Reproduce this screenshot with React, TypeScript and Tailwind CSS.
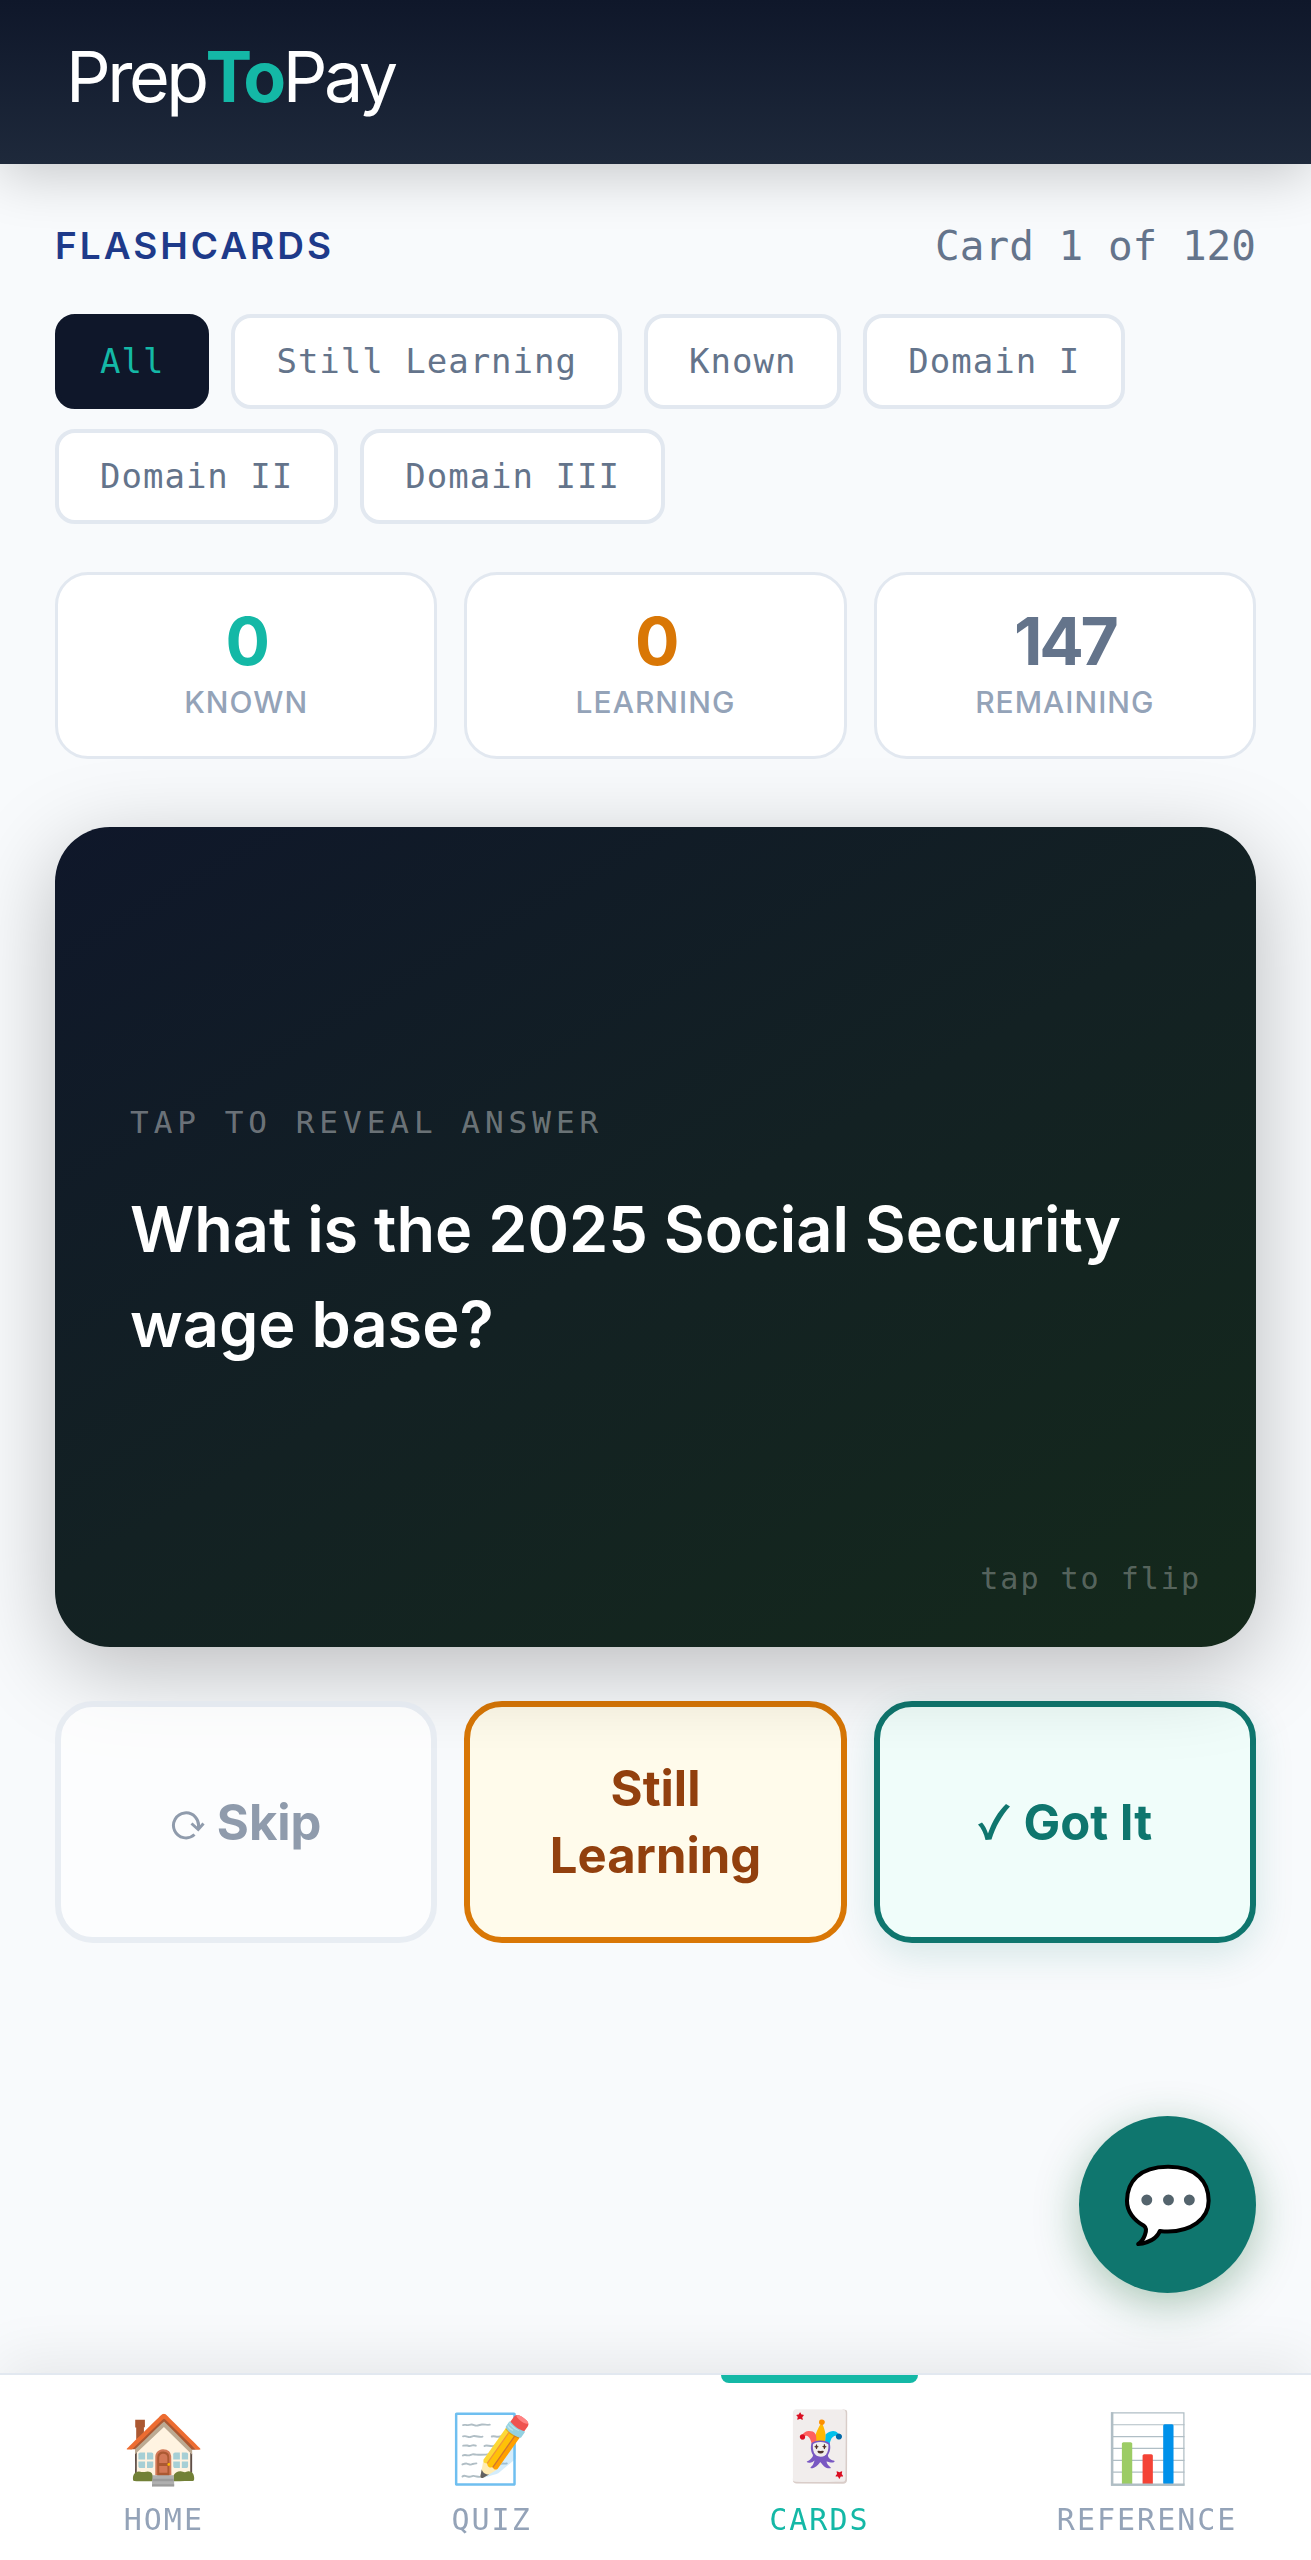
import React, { useState } from 'react';
import clsx from 'clsx';

const FILTERS = ['All', 'Still Learning', 'Known', 'Domain I', 'Domain II', 'Domain III'];

const STATS = [
  { label: 'Known', value: 0, color: 'text-[#14b8a6]' },
  { label: 'Learning', value: 0, color: 'text-[#d97706]' },
  { label: 'Remaining', value: 147, color: 'text-[#64748b]' },
];

const TABS = [
  { label: 'Home', icon: '🏠', href: '#home' },
  { label: 'Quiz', icon: '📝', href: '#quiz' },
  { label: 'Cards', icon: '🃏', href: '#cards' },
  { label: 'Reference', icon: '📊', href: '#reference' },
];

const MONO = "font-['DejaVu_Sans_Mono',monospace]";

function Header() {
  return (
    <header className="relative z-10 bg-gradient-to-b from-[#0f172a] to-[#1e293b] px-[66px] pt-8 pb-[42px] shadow-[0_11px_55px_rgba(0,0,0,0.2)]">
      <a href="#home" className="block w-fit text-[70px] leading-[90px] tracking-tighter text-white">
        Prep<span className="font-bold text-[#14b8a6]">To</span>Pay
      </a>
    </header>
  );
}

function Filters() {
  const [active, setActive] = useState('All');

  return (
    <div className="mt-[41px] flex flex-wrap gap-x-[22px] gap-y-5">
      {FILTERS.map((name) => (
        <button
          key={name}
          type="button"
          aria-pressed={active === name}
          onClick={() => setActive(name)}
          className={clsx(
            MONO,
            'rounded-[20px] border-4 px-[41px] py-[19px] text-[34px] leading-[49px] tracking-[1px]',
            active === name
              ? 'border-[#0f172a] bg-[#0f172a] text-[#14b8a6]'
              : 'border-slate-200 bg-white text-[#64748b]'
          )}
        >
          {name}
        </button>
      ))}
    </div>
  );
}

function Stats() {
  return (
    <div className="mt-12 grid grid-cols-3 gap-[27px]">
      {STATS.map((stat) => (
        <div key={stat.label} className="rounded-[33px] border-[3px] border-slate-200 bg-white py-[33px] text-center">
          <div className={clsx('text-[66px] leading-[66px] font-bold tracking-tighter', stat.color)}>{stat.value}</div>
          <div className="mt-[7px] text-[30px] leading-[42px] font-medium tracking-[1px] text-[#94a3b8] uppercase">
            {stat.label}
          </div>
        </div>
      ))}
    </div>
  );
}

function Flashcard() {
  return (
    <button
      type="button"
      className="relative mt-[68px] flex min-h-[820px] w-full flex-col items-start justify-center rounded-[55px] bg-[linear-gradient(150deg,#0f172a_0%,#132123_50%,#14291b_100%)] px-[75px] text-left shadow-[0_22px_87px_rgba(0,0,0,0.25)]"
    >
      <span className={clsx(MONO, 'text-[31px] leading-10 tracking-[5px] text-white/40 uppercase')}>
        Tap to reveal answer
      </span>
      <span className="mt-10 text-[63px] leading-[95px] font-semibold text-white">
        What is the 2025 Social Security wage base?
      </span>
      <span className={clsx(MONO, 'absolute right-[55px] bottom-12 text-[30px] leading-10 tracking-[2px] text-white/30')}>
        tap to flip
      </span>
    </button>
  );
}

function SkipIcon() {
  return (
    <svg viewBox="0 0 34 30" className="mt-2 h-[30px] w-[34px]" fill="none" stroke="currentColor" strokeWidth="3" aria-hidden="true">
      <path d="M23.5 23.5A12.5 12.5 0 1 1 27.2 17" />
      <path d="M20.5 12.5 27.2 18.5 32.5 12.5" />
    </svg>
  );
}

function CheckIcon() {
  return (
    <svg viewBox="0 0 34 38" className="h-[38px] w-[34px]" fill="currentColor" aria-hidden="true">
      <path d="M1 21.5 5 19.5C7.5 22 9.5 26 11 30.5 15 19 21 8.5 29 1L33 3.5C24.5 13 18.5 23.5 14.5 36.5L8.5 37C7 30.5 4.5 25 1 21.5Z" />
    </svg>
  );
}

function Answers() {
  const base = 'flex items-center justify-center rounded-[38px] border-[6px] px-[41px] py-12 text-[49px] leading-[67px] font-bold';

  return (
    <div className="mt-[54px] grid grid-cols-3 gap-[27px]">
      <button type="button" className={clsx(base, 'gap-3 border-slate-200 bg-white text-[#64748b] opacity-70')}>
        <SkipIcon />
        Skip
      </button>
      <button type="button" className={clsx(base, 'border-[#d97706] bg-[#fffbeb] text-[#92400e]')}>
        Still Learning
      </button>
      <button
        type="button"
        className={clsx(base, 'gap-3 border-[#0f766e] bg-[#f0fdfa] text-[#0f766e] shadow-[0_11px_38px_rgba(15,118,110,0.15)]')}
      >
        <CheckIcon />
        Got It
      </button>
    </div>
  );
}

function BottomNav() {
  return (
    <nav className="fixed inset-x-0 bottom-0 grid grid-cols-4 border-t-2 border-slate-200 bg-white shadow-[0_-11px_55px_rgba(0,0,0,0.08)]">
      {TABS.map((tab) => {
        const current = tab.label === 'Cards';
        return (
          <a
            key={tab.label}
            href={tab.href}
            aria-current={current ? 'page' : undefined}
            className={clsx('relative flex flex-col items-center pt-[33px] pb-5', current ? 'text-[#14b8a6]' : 'text-[#94a3b8]')}
          >
            {current && <span className="absolute top-0 left-1/5 h-2 w-3/5 rounded-b-lg bg-[#14b8a6]" />}
            <span className={clsx('text-[67px] leading-[80px]', current && '-translate-y-[3px]')}>{tab.icon}</span>
            <span className={clsx(MONO, 'mt-3 text-[30px] leading-10 tracking-[2px] uppercase')}>{tab.label}</span>
          </a>
        );
      })}
    </nav>
  );
}

export default function App() {
  return (
    <div className="min-h-screen bg-[#f8fafc] pb-[187px] font-['Inter',sans-serif]">
      <Header />

      <main className="px-[55px] pt-[55px]">
        <div className="flex items-center justify-between">
          <h1 className="text-[37px] leading-[54px] font-semibold tracking-[3px] text-[#1e3a8a] uppercase">Flashcards</h1>
          <span className={clsx(MONO, 'text-[41px] leading-[54px] text-[#64748b]')}>Card 1 of 120</span>
        </div>

        <Filters />
        <Stats />
        <Flashcard />
        <Answers />
      </main>

      <button
        type="button"
        aria-label="Open chat"
        className="fixed right-[55px] bottom-[267px] flex size-[177px] items-center justify-center rounded-full bg-[#0f766e] pb-1 text-[74px] leading-none shadow-[0_11px_44px_rgba(22,101,52,0.35)]"
      >
        💬
      </button>

      <BottomNav />
    </div>
  );
}
